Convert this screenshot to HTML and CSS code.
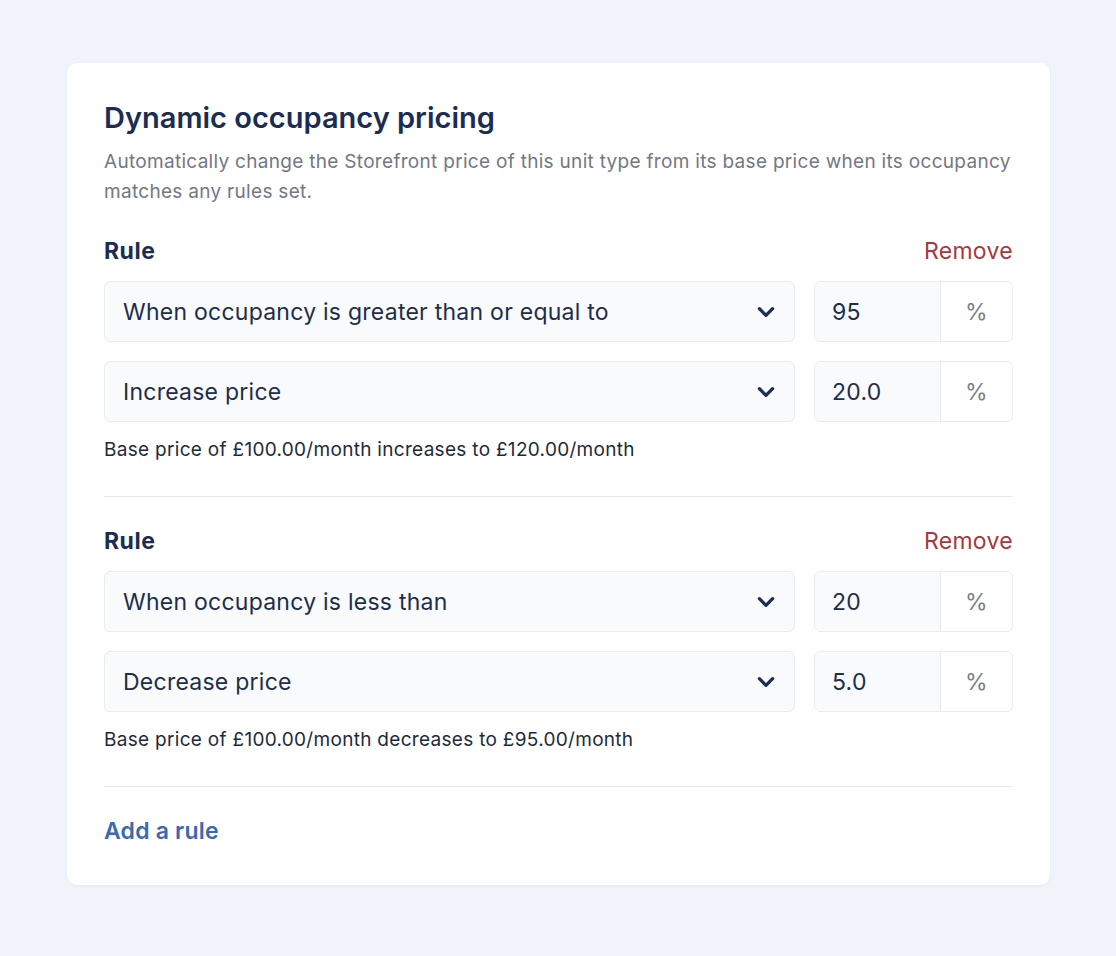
FILE: index.html
```html
<!DOCTYPE html>
<html lang="en">

<head>
  <meta charset="UTF-8">
  <meta name="viewport" content="width=device-width, initial-scale=1.0">
  <title>Dynamic occupancy pricing</title>
  <link rel="stylesheet" href="styles.css">
</head>

<body>
  <div class="page">
    <div class="card">
      <h1>Dynamic occupancy pricing</h1>
      <p class="intro">Automatically change the Storefront price of this unit type from its base price when its occupancy matches any rules set.</p>

      <div class="rule">
        <div class="rule-head">
          <span class="rule-title">Rule</span>
          <a href="#" class="remove">Remove</a>
        </div>
        <div class="row">
          <div class="select">
            <span>When occupancy is greater than or equal to</span>
            <svg class="chevron" viewBox="0 0 20 20"><path d="M4 7l6 6 6-6" /></svg>
          </div>
          <div class="number">
            <span class="value">95</span>
            <span class="unit">%</span>
          </div>
        </div>
        <div class="row">
          <div class="select">
            <span>Increase price</span>
            <svg class="chevron" viewBox="0 0 20 20"><path d="M4 7l6 6 6-6" /></svg>
          </div>
          <div class="number">
            <span class="value">20.0</span>
            <span class="unit">%</span>
          </div>
        </div>
        <p class="hint">Base price of £100.00/month increases to £120.00/month</p>
      </div>

      <div class="rule">
        <div class="rule-head">
          <span class="rule-title">Rule</span>
          <a href="#" class="remove">Remove</a>
        </div>
        <div class="row">
          <div class="select">
            <span>When occupancy is less than</span>
            <svg class="chevron" viewBox="0 0 20 20"><path d="M4 7l6 6 6-6" /></svg>
          </div>
          <div class="number">
            <span class="value">20</span>
            <span class="unit">%</span>
          </div>
        </div>
        <div class="row">
          <div class="select">
            <span>Decrease price</span>
            <svg class="chevron" viewBox="0 0 20 20"><path d="M4 7l6 6 6-6" /></svg>
          </div>
          <div class="number">
            <span class="value">5.0</span>
            <span class="unit">%</span>
          </div>
        </div>
        <p class="hint">Base price of £100.00/month decreases to £95.00/month</p>
      </div>

      <a href="#" class="add">Add a rule</a>
    </div>
  </div>
</body>

</html>
```

FILE: styles.css
```css
body {
  margin: 0;
  background-color: #f0f4fa;
  font-family: Inter, "Noto Sans", sans-serif;
  color: #1e2d4a;
}

.page {
  padding: 63px 66px 72px 67px;
}

.card {
  background-color: #ffffff;
  border-radius: 10px;
  padding: 37px 37px 39px 37px;
  box-shadow: 0 1px 3px rgba(30, 45, 80, 0.06);
}

h1 {
  margin: 0;
  font-size: 29px;
  line-height: 36px;
  font-weight: 600;
  color: #1b2d52;
  letter-spacing: 0;
}

.intro {
  margin: 11px 0 0 0;
  font-size: 19px;
  line-height: 30px;
  letter-spacing: 0.3px;
  color: #727884;
}

.rule {
  padding-bottom: 33px;
  border-bottom: 1px solid #e6e9ef;
}

.rule:first-of-type {
  margin-top: 29px;
}

.rule + .rule {
  margin-top: 0;
  padding-top: 29px;
}

.rule-head {
  display: flex;
  justify-content: space-between;
  align-items: center;
  height: 30px;
  margin-bottom: 15px;
}

.rule-title {
  font-size: 23px;
  font-weight: 700;
  letter-spacing: 0.5px;
  color: #1b2d52;
}

.remove {
  font-size: 23px;
  letter-spacing: 0.3px;
  color: #a8383d;
  text-decoration: none;
}

.row {
  display: flex;
  gap: 19px;
  margin-bottom: 19px;
}

.row:last-of-type {
  margin-bottom: 0;
}

.select {
  flex: 1;
  height: 59px;
  display: flex;
  align-items: center;
  justify-content: space-between;
  padding: 0 17px 0 18px;
  border: 1px solid #e8ebf0;
  border-radius: 6px;
  background-color: #f8fafc;
  font-size: 23px;
  letter-spacing: 0.25px;
  color: #1e2d4a;
}

.chevron {
  width: 22px;
  height: 22px;
  fill: none;
  stroke: #1b2d52;
  stroke-width: 3;
  stroke-linecap: round;
  stroke-linejoin: round;
}

.number {
  width: 197px;
  height: 59px;
  display: flex;
  border: 1px solid #e8ebf0;
  border-radius: 6px;
  overflow: hidden;
  font-size: 23px;
  letter-spacing: 0.25px;
}

.value {
  width: 108px;
  padding-left: 17px;
  display: flex;
  align-items: center;
  background-color: #f8fafc;
  border-right: 1px solid #e8ebf0;
  color: #1e2d4a;
}

.unit {
  flex: 1;
  display: flex;
  align-items: center;
  justify-content: center;
  color: #7a808a;
}

.hint {
  margin: 15px 0 0 0;
  font-size: 19px;
  line-height: 26px;
  letter-spacing: 0.3px;
  color: #1e2a3b;
}

.add {
  display: block;
  margin-top: 29px;
  font-size: 23px;
  line-height: 30px;
  font-weight: 600;
  letter-spacing: 0.2px;
  color: #3c68b0;
  text-decoration: none;
}
```
